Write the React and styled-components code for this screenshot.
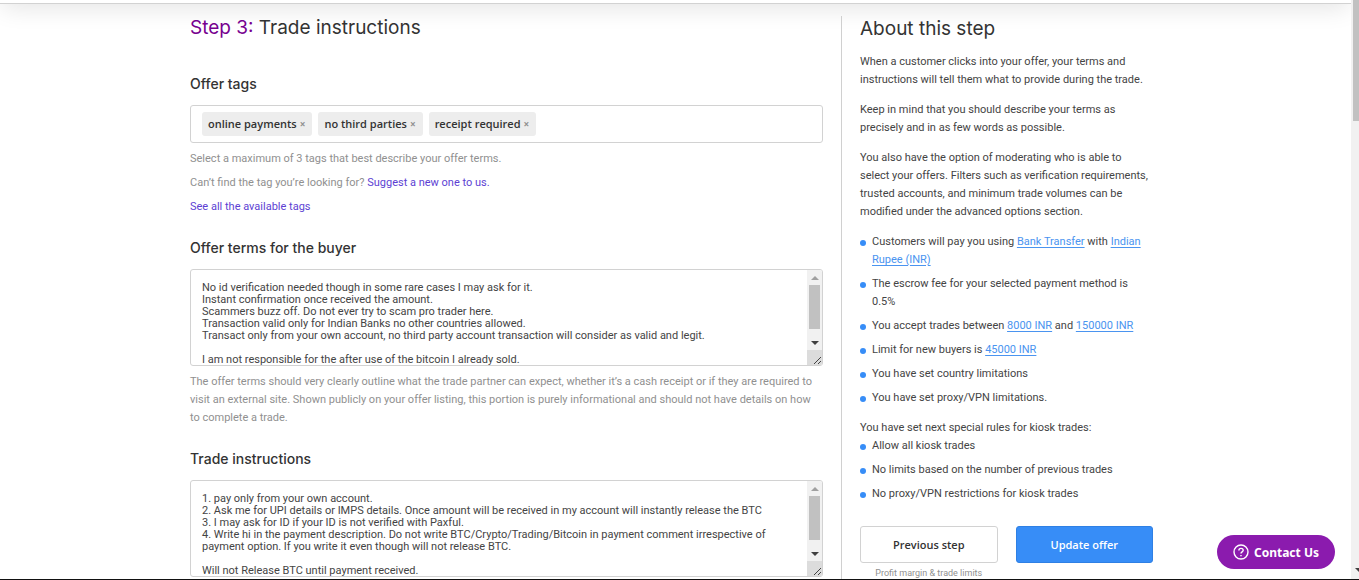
import React, { useState } from 'react';
import styled, { createGlobalStyle } from 'styled-components';

const TERMS = `No id verification needed though in some rare cases I may ask for it.
Instant confirmation once received the amount.
Scammers buzz off. Do not ever try to scam pro trader here.
Transaction valid only for Indian Banks no other countries allowed.
Transact only from your own account, no third party account transaction will consider as valid and legit.

I am not responsible for the after use of the bitcoin I already sold.`;

const INSTRUCTIONS = `1. pay only from your own account.
2. Ask me for UPI details or IMPS details. Once amount will be received in my account will instantly release the BTC
3. I may ask for ID if your ID is not verified with Paxful.
4. Write hi in the payment description. Do not write BTC/Crypto/Trading/Bitcoin in payment comment irrespective of payment option. If you write it even though will not release BTC.

Will not Release BTC until payment received.`;

const TextBox = ({ id, value, onChange }) => (
  <TextBoxFrame>
    <textarea id={id} value={value} onChange={(e) => onChange(e.target.value)} spellCheck={false} />
    <ScrollRail aria-hidden="true">
      <Arrow $up />
      <Thumb />
      <Arrow />
      <Grip viewBox="0 0 15 15">
        <path d="M7 14 L14 7 M11 14 L14 11" />
      </Grip>
    </ScrollRail>
  </TextBoxFrame>
);

const App = () => {
  const [tags, setTags] = useState(['online payments', 'no third parties', 'receipt required']);
  const [terms, setTerms] = useState(TERMS);
  const [instructions, setInstructions] = useState(INSTRUCTIONS);

  const removeTag = (tag) => {
    setTags(tags.filter((t) => t !== tag));
  };

  return (
    <>
      <GlobalStyle />
      <Window>
        <Page>
          <Header />
          <Container>
            <Main>
              <Title>
                <span>Step 3:</span> Trade instructions
              </Title>
              <Section>
                <h2>Offer tags</h2>
                <TagBox>
                  {tags.map((tag) => (
                    <Tag key={tag}>
                      {tag}
                      <button type="button" aria-label={`Remove ${tag}`} onClick={() => removeTag(tag)}>
                        ×
                      </button>
                    </Tag>
                  ))}
                </TagBox>
                <Help>Select a maximum of 3 tags that best describe your offer terms.</Help>
                <Help>
                  Can’t find the tag you’re looking for? <a href="#suggest">Suggest a new one to us.</a>
                </Help>
                <Help>
                  <a href="#tags">See all the available tags</a>
                </Help>
              </Section>
              <Section>
                <h2>
                  <label htmlFor="terms">Offer terms for the buyer</label>
                </h2>
                <TextBox id="terms" value={terms} onChange={setTerms} />
                <Help>
                  The offer terms should very clearly outline what the trade partner can expect, whether it’s a cash
                  receipt or if they are required to visit an external site. Shown publicly on your offer listing, this
                  portion is purely informational and should not have details on how to complete a trade.
                </Help>
              </Section>
              <Section>
                <h2>
                  <label htmlFor="instructions">Trade instructions</label>
                </h2>
                <TextBox id="instructions" value={instructions} onChange={setInstructions} />
              </Section>
            </Main>
            <Aside>
              <Title as="h2">About this step</Title>
              <p>
                When a customer clicks into your offer, your terms and instructions will tell them what to provide
                during the trade.
              </p>
              <p>Keep in mind that you should describe your terms as precisely and in as few words as possible.</p>
              <p>
                You also have the option of moderating who is able to select your offers. Filters such as verification
                requirements, trusted accounts, and minimum trade volumes can be modified under the advanced options
                section.
              </p>
              <List>
                <li>
                  Customers will pay you using <a href="#method">Bank Transfer</a> with{' '}
                  <a href="#currency">Indian Rupee (INR)</a>
                </li>
                <li>The escrow fee for your selected payment method is 0.5%</li>
                <li>
                  You accept trades between <a href="#min">8000 INR</a> and <a href="#max">150000 INR</a>
                </li>
                <li>
                  Limit for new buyers is <a href="#limit">45000 INR</a>
                </li>
                <li>You have set country limitations</li>
                <li>You have set proxy/VPN limitations.</li>
              </List>
              <h3>You have set next special rules for kiosk trades:</h3>
              <List>
                <li>Allow all kiosk trades</li>
                <li>No limits based on the number of previous trades</li>
                <li>No proxy/VPN restrictions for kiosk trades</li>
              </List>
              <Actions>
                <div>
                  <Button type="button">Previous step</Button>
                  <small>Profit margin &amp; trade limits</small>
                </div>
                <div>
                  <Button type="button" $primary>
                    Update offer
                  </Button>
                </div>
              </Actions>
            </Aside>
          </Container>
        </Page>
        <PageRail aria-hidden="true">
          <div />
          <svg viewBox="0 0 6 12">
            <path d="M2 1 H6 V5 Z" />
          </svg>
        </PageRail>
      </Window>
      <Contact type="button">
        <svg viewBox="0 0 16 16">
          <circle cx="8" cy="8" r="7" />
          <path d="M5.9 6.4 C5.9 3.6 10.2 3.7 10.2 6.3 C10.2 7.9 8 7.9 8 9.6 M8 10.9 V12.3" />
        </svg>
        Contact Us
      </Contact>
    </>
  );
};

const GlobalStyle = createGlobalStyle`
  * {
    box-sizing: border-box;
  }
  body {
    margin: 0;
    color: #444;
    background: #fff;
    font-family: Roboto, 'Open Sans', sans-serif;
    font-size: 11px;
    line-height: 18px;
  }
  h1, h2, h3, p, ul {
    margin: 0;
    padding: 0;
    font-weight: 400;
  }
  button, textarea {
    font-family: inherit;
    font-size: inherit;
  }
`;

const Window = styled.div`
  display: flex;
  height: 100vh;
  overflow: hidden;
  border-bottom: 1px solid #111;
`;

const Page = styled.div`
  flex: 1;
  min-width: 0;
  overflow: hidden;
`;

const Header = styled.header`
  height: 60px;
  margin-top: -56px;
  border-bottom: 1px solid #d2d2d2;
  box-shadow: 0 6px 24px -2px rgba(0, 0, 0, 0.11);
`;

const Container = styled.div`
  display: flex;
  gap: 18px;
  max-width: 971px;
  margin: 0 auto;
  padding: 12px 8px 0 0;
`;

const Main = styled.main`
  flex: 1;
  min-width: 0;
`;

const Aside = styled.aside`
  flex: 0 0 312px;
  padding: 1px 0 0 18px;
  border-left: 1px solid #d0d0d0;
  p {
    margin-bottom: 12px;
    padding-right: 4px;
  }
  h3 {
    margin-top: 12px;
    font-size: 11px;
  }
`;

const Title = styled.h1`
  margin-bottom: 12px;
  color: #333;
  font-family: Inter, 'Open Sans', sans-serif;
  font-size: 19px;
  line-height: 24px;
  span {
    color: #77008f;
  }
`;

const Section = styled.section`
  padding-top: 22px;
  h2 {
    margin-bottom: 11px;
    color: #333;
    font-family: Inter, 'Open Sans', sans-serif;
    font-size: 14px;
    font-weight: 500;
    line-height: 20px;
  }
`;

const TagBox = styled.div`
  display: flex;
  align-items: center;
  gap: 6px;
  height: 38px;
  margin-bottom: 7px;
  padding: 0 11px;
  border: 1px solid #d2d2d2;
  border-radius: 3px;
`;

const Tag = styled.span`
  display: flex;
  align-items: center;
  height: 24px;
  padding: 0 7px 0 6px;
  border-radius: 3px;
  background: #ededed;
  color: #333;
  font-family: 'Open Sans', sans-serif;
  font-weight: 600;
  button {
    margin-left: 3px;
    padding: 0;
    border: 0;
    background: none;
    color: #909090;
    font-size: 10px;
    font-weight: 700;
    line-height: 18px;
  }
`;

const Help = styled.p`
  color: #909090;
  & + & {
    margin-top: 6px;
  }
  a {
    color: #5d3fd3;
    text-decoration: none;
  }
`;

const TextBoxFrame = styled.div`
  display: flex;
  height: 97px;
  margin-bottom: 7px;
  overflow: hidden;
  border: 1px solid #d2d2d2;
  border-radius: 3px;
  textarea {
    flex: 1;
    min-width: 0;
    padding: 12px 11px 0;
    border: 0;
    outline: 0;
    overflow: hidden;
    resize: none;
    background: none;
    color: #444;
    line-height: 12px;
  }
`;

const ScrollRail = styled.div`
  display: flex;
  flex-direction: column;
  align-items: center;
  width: 15px;
  background: #f1f1f1;
`;

const Arrow = styled.span`
  display: flex;
  align-items: center;
  justify-content: center;
  height: 15px;
  &::before {
    content: '';
    border: 4px solid transparent;
    border-top-width: ${({ $up }) => ($up ? 0 : '4px')};
    border-bottom-width: ${({ $up }) => ($up ? '4px' : 0)};
    border-top-color: ${({ $up }) => ($up ? 'transparent' : '#404040')};
    border-bottom-color: ${({ $up }) => ($up ? '#a0a0a0' : 'transparent')};
  }
`;

const Thumb = styled.span`
  width: 11px;
  height: 44px;
  margin-bottom: auto;
  background: #c1c1c1;
`;

const Grip = styled.svg`
  width: 15px;
  height: 15px;
  background: #dcdcdc;
  path {
    fill: none;
    stroke: #444;
  }
`;

const List = styled.ul`
  list-style: none;
  li {
    position: relative;
    padding: 0 4px 0 12px;
  }
  li + li {
    margin-top: 6px;
  }
  li::before {
    content: '';
    position: absolute;
    top: 7px;
    left: 0;
    width: 6px;
    height: 6px;
    border-radius: 50%;
    background: #378df7;
  }
  a {
    color: #4a94f0;
    text-underline-offset: 2px;
  }
`;

const Actions = styled.div`
  display: grid;
  grid-template-columns: 1fr 1fr;
  gap: 18px;
  margin-top: 23px;
  small {
    display: block;
    color: #909090;
    font-size: 9px;
    line-height: 20px;
    text-align: center;
    white-space: nowrap;
  }
`;

const Button = styled.button`
  display: block;
  width: 100%;
  height: 37px;
  border: 1px solid ${({ $primary }) => ($primary ? '#2f80e4' : '#d2d2d2')};
  border-radius: 3px;
  background: ${({ $primary }) => ($primary ? '#378df7' : '#fff')};
  color: ${({ $primary }) => ($primary ? '#fff' : '#333')};
  font-family: 'Open Sans', sans-serif;
  font-weight: 600;
`;

const PageRail = styled.div`
  display: flex;
  flex-direction: column;
  justify-content: space-between;
  width: 8px;
  padding-left: 2px;
  background: #f1f1f1;
  div {
    height: 121px;
    background: #c1c1c1;
  }
  svg {
    width: 6px;
    height: 12px;
    fill: #404040;
  }
`;

const Contact = styled.button`
  position: fixed;
  right: 24px;
  bottom: 11px;
  display: flex;
  align-items: center;
  gap: 5px;
  height: 34px;
  padding: 0 16px;
  border: 0;
  border-radius: 17px;
  background: #8b1bae;
  color: #fff;
  font-family: 'Noto Sans', 'Open Sans', sans-serif;
  font-size: 12px;
  font-weight: 700;
  svg {
    width: 16px;
    height: 16px;
    fill: none;
    stroke: #fff;
    stroke-width: 1.4;
  }
`;

export default App;
